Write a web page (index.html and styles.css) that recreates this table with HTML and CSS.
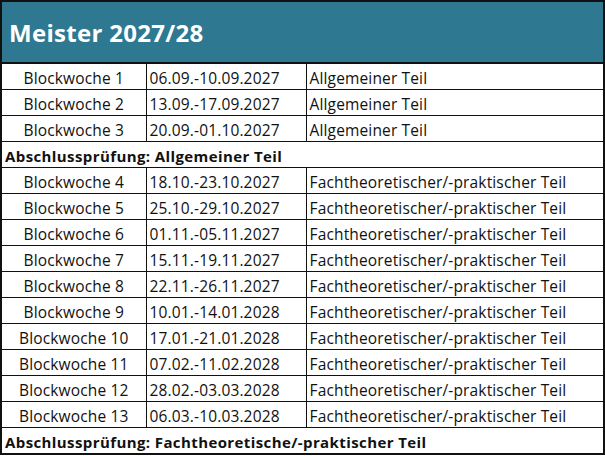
FILE: index.html
```html
<!DOCTYPE html>
<html lang="de">
<head>
<meta charset="utf-8">
<link rel="stylesheet" href="styles.css">
</head>
<body>
<table class="plan">
  <colgroup><col class="c1"><col class="c2"><col class="c3"></colgroup>
  <tr class="head"><th colspan="3">Meister 2027/28</th></tr>
  <tr><td class="wk">Blockwoche 1</td><td>06.09.-10.09.2027</td><td>Allgemeiner Teil</td></tr>
  <tr><td class="wk">Blockwoche 2</td><td>13.09.-17.09.2027</td><td>Allgemeiner Teil</td></tr>
  <tr><td class="wk">Blockwoche 3</td><td>20.09.-01.10.2027</td><td>Allgemeiner Teil</td></tr>
  <tr class="exam"><td colspan="3">Abschlussprüfung: Allgemeiner Teil</td></tr>
  <tr><td class="wk">Blockwoche 4</td><td>18.10.-23.10.2027</td><td>Fachtheoretischer/-praktischer Teil</td></tr>
  <tr><td class="wk">Blockwoche 5</td><td>25.10.-29.10.2027</td><td>Fachtheoretischer/-praktischer Teil</td></tr>
  <tr><td class="wk">Blockwoche 6</td><td>01.11.-05.11.2027</td><td>Fachtheoretischer/-praktischer Teil</td></tr>
  <tr><td class="wk">Blockwoche 7</td><td>15.11.-19.11.2027</td><td>Fachtheoretischer/-praktischer Teil</td></tr>
  <tr><td class="wk">Blockwoche 8</td><td>22.11.-26.11.2027</td><td>Fachtheoretischer/-praktischer Teil</td></tr>
  <tr><td class="wk">Blockwoche 9</td><td>10.01.-14.01.2028</td><td>Fachtheoretischer/-praktischer Teil</td></tr>
  <tr><td class="wk">Blockwoche 10</td><td>17.01.-21.01.2028</td><td>Fachtheoretischer/-praktischer Teil</td></tr>
  <tr><td class="wk">Blockwoche 11</td><td>07.02.-11.02.2028</td><td>Fachtheoretischer/-praktischer Teil</td></tr>
  <tr><td class="wk">Blockwoche 12</td><td>28.02.-03.03.2028</td><td>Fachtheoretischer/-praktischer Teil</td></tr>
  <tr><td class="wk">Blockwoche 13</td><td>06.03.-10.03.2028</td><td>Fachtheoretischer/-praktischer Teil</td></tr>
  <tr class="exam"><td colspan="3">Abschlussprüfung: Fachtheoretische/-praktischer Teil</td></tr>
</table>
</body>
</html>
```
FILE: styles.css
```css
html, body {
  margin: 0;
  padding: 0;
  background: #ffffff;
}
body {
  font-family: "Open Sans", "Liberation Sans", sans-serif;
  color: #111111;
}
.plan {
  border-collapse: collapse;
  width: 603px;
  table-layout: fixed;
  border: 2px solid #111;
}
.c1 { width: 145px; }
.c2 { width: 160px; }
.c3 { width: 298px; }
.head th {
  background: #2e7891;
  color: #ffffff;
  font-size: 24px;
  font-weight: 700;
  text-align: left;
  height: 60px;
  padding: 0 0 0 7px;
  border-bottom: 2px solid #111;
  letter-spacing: 0.3px;
}
td {
  height: 23px;
  padding: 2px 0 0 3px;
  border: 1px solid #111;
  font-size: 15.5px;
  line-height: 18px;
  letter-spacing: 0.15px;
  white-space: nowrap;
  vertical-align: middle;
}
td.wk {
  text-align: center;
  padding-left: 0;
}
.exam td {
  font-weight: 700;
  font-size: 15px;
  letter-spacing: 0.4px;
  padding-left: 3px;
}
```
